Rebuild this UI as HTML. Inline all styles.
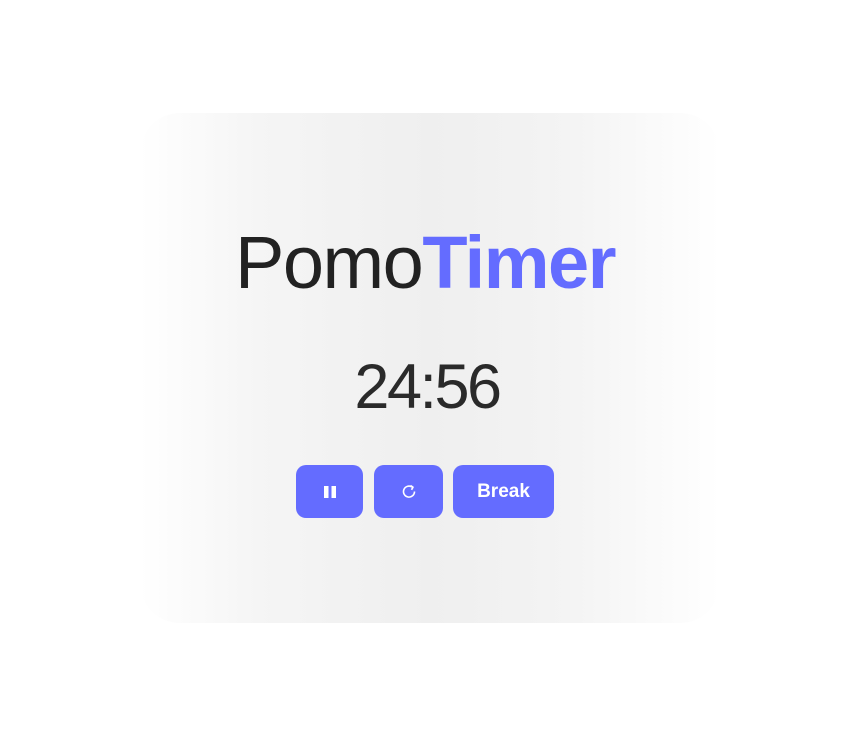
<!DOCTYPE html>
<html><head><style>
html,body{margin:0;padding:0;background:#fff;width:860px;height:745px;overflow:hidden;font-family:"Liberation Sans",sans-serif}
.card{position:absolute;left:140px;top:113px;width:580px;height:510px;border-radius:40px;background:linear-gradient(90deg,#fff 0%,#f5f5f5 20%,#efefef 50%,#f4f4f4 75%,#fff 100%)}
.title{position:absolute;left:-5px;width:860px;top:218px;text-align:center;font-size:74px;line-height:90px;color:#222;letter-spacing:-1.5px;white-space:nowrap}
.title b{color:#646cff;font-weight:bold}
.time{position:absolute;left:-3px;width:860px;top:349px;text-align:center;font-size:63px;line-height:76px;color:#2a2a2a;letter-spacing:-2.5px}
.btn{position:absolute;top:465px;height:53px;background:#646cff;border-radius:10px;color:#fff;display:flex;align-items:center;justify-content:center;font-weight:bold;font-size:19px}
</style></head><body>
<div class="card"></div>
<div class="title">Pomo<b>Timer</b></div>
<div class="time">24:56</div>
<div class="btn" style="left:296px;width:67px"><svg width="16" height="16" viewBox="0 0 16 16"><rect x="2" y="2" width="4.5" height="12" fill="#fff"/><rect x="9.5" y="2" width="4.5" height="12" fill="#fff"/></svg></div>
<div class="btn" style="left:374px;width:69px"><svg width="18" height="18" viewBox="0 0 18 18" fill="none" stroke="#fff" stroke-width="1.6"><path d="M14.5 8.5A5.5 5.5 0 1 1 12 4"/><path d="M10.5 2.5L13 4.2 11.5 6.8" stroke-linejoin="round"/></svg></div>
<div class="btn" style="left:453px;width:101px">Break</div>
</body></html>
